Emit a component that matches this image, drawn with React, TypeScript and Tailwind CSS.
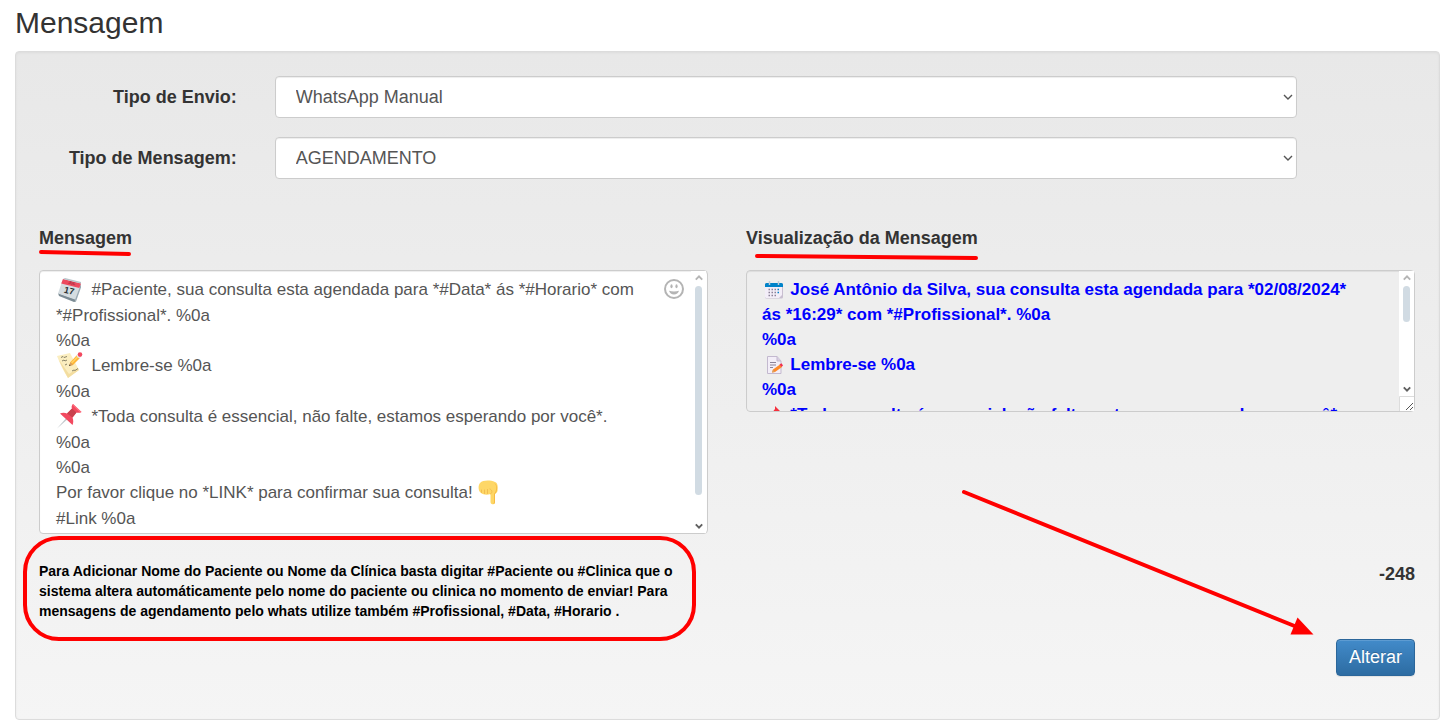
import type { ReactNode } from "react";

const previewText = [
  "      José Antônio da Silva, sua consulta esta agendada para *02/08/2024* ás *16:29* com *#Profissional*. %0a",
  "%0a",
  "      Lembre-se %0a",
  "%0a",
  "      *Toda consulta é essencial, não falte, estamos esperando por você*.",
].join("\n");

const shippingTypes = ["WhatsApp Manual", "WhatsApp Automático", "SMS"];
const messageTypes = ["AGENDAMENTO", "CONFIRMAÇÃO", "ANIVERSÁRIO"];

function Emoji({ children, label }: { children: ReactNode; label: string }) {
  return (
    <svg
      role="img"
      aria-label={label}
      viewBox="0 1 26 26"
      className="inline-block size-[26px] overflow-visible align-top"
    >
      {children}
    </svg>
  );
}

function CalendarEmoji() {
  return (
    <Emoji label="Calendário">
      <path d="M2 17 19 23l1 2.500-2 .5L3 20z" fill="#7b8b94" />
      <path d="M7 3 25 7.500 19 23.500 2 17.500z" fill="#d5dde1" />
      <path d="M25 7.500v4l-5 14-1-2z" fill="#9aaab4" />
      <path d="M7 3 25 7.500 23.300 12 5.200 7.500z" fill="#ec4a5f" />
      <path d="M7 3l2-1 16 4v1.500z" fill="#b9c5cb" />
      <text x="12" y="7.500" fontSize="4" fontWeight="bold" fill="#a0293b" transform="rotate(14 12 7)">
        JUL
      </text>
      <text x="8" y="17" fontSize="9" fontWeight="bold" fill="#2c3336" transform="rotate(14 10 15)">
        17
      </text>
    </Emoji>
  );
}

function NoteEmoji() {
  return (
    <Emoji label="Anotação">
      <path d="M1 4 14 1l9 17-11 8C8 20 4 12 1 4z" fill="#fbeec0" />
      <path d="M3 8c3 7 6 12 9 18l11-8-1-2-9 6z" fill="#f3dda0" />
      <path
        d="M5 5.500l2-1 1 1 3-1M6 9l2-1 1 1 2-1M9 13l2-1M16 19l2-1 1 .5 3-2"
        fill="none"
        stroke="#8a8468"
        strokeWidth="1"
      />
      <path d="M13 14l1.500-4L21 3l3 3-7 7z" fill="#ffb636" />
      <path d="M15 10.500l7-7 1 1-7 7z" fill="#ffd469" />
      <path d="M13 14l1.500-4 2.500 3z" fill="#d9a05f" />
      <path d="M13 14l.6-1.600 1 1z" fill="#2b3b47" />
      <path d="M21 3l3 3" stroke="#e8ebed" strokeWidth="2" />
      <circle cx="24" cy="2.600" r="2.300" fill="#f2495f" />
    </Emoji>
  );
}

function PinEmoji() {
  return (
    <Emoji label="Alfinete">
      <path d="M1 25.500 12 13l1.500 1.500z" fill="#c0c7cb" />
      <path d="M4 10.500c2-1 5-1 7 0l5-5C15 4 16 2 17 1l8.500 8c-2 1-3.500 1-5 .5l-4 5c1 3 1 5 0 7.500z" fill="#f2495f" />
      <path d="M11 10.500l5-5 4.500 4-4 5z" fill="#c9414d" />
      <path d="M17 1l8.500 8-1.500.5L16.500 2z" fill="#ff6f7f" />
    </Emoji>
  );
}

function PointDownEmoji() {
  return (
    <Emoji label="Apontando para baixo">
      <path
        d="M3 4c3-3 10-3 15-1 3 1 3 5 2.500 9-.5 2-2 2-2.500 3v8c0 3-4.500 3-4.500 0v-8c-3 1-7 1-9.500-1C1 12 1 6 3 4z"
        fill="#fed766"
      />
      <path
        d="M4.500 11v2.500M7.500 11v3.500M10.500 10.500v4M13.500 15c2-1 2-4-.5-5"
        fill="none"
        stroke="#f2bd50"
        strokeWidth="1"
        strokeLinecap="round"
      />
      <path d="M17 4c3 2 3 7 0 11v8c0 1-.5 2-1.500 2.200 2 .3 2.500-1.200 2.500-2.200v-8c3-3 3-10-1-11z" fill="#f7bb42" />
    </Emoji>
  );
}

function SmileIcon() {
  return (
    <svg viewBox="0 0 20 20" className="size-5" aria-hidden="true">
      <circle cx="10" cy="10" r="9" fill="none" stroke="#b4b4b4" strokeWidth="2" />
      <ellipse cx="7.500" cy="7.300" rx="1.100" ry="2" fill="#b4b4b4" />
      <ellipse cx="12.500" cy="7.300" rx="1.100" ry="2" fill="#b4b4b4" />
      <path d="M5 11.800c3 .8 7 .8 10 0-.6 2.200-2.600 3.700-5 3.700s-4.400-1.500-5-3.700z" fill="#b4b4b4" />
    </svg>
  );
}

function Chevron({ up, thin, className }: { up?: boolean; thin?: boolean; className: string }) {
  return (
    <svg viewBox="0 0 10 6" className={className} aria-hidden="true">
      <path
        d={up ? "M1 5l4-4 4 4" : "M1 1l4 4 4-4"}
        fill="none"
        stroke="currentColor"
        strokeWidth={thin ? 1.4 : 2.4}
      />
    </svg>
  );
}

function Scrollbar({ thumb }: { thumb: string }) {
  return (
    <div className="flex h-full w-[15px] flex-col items-center bg-white py-1">
      <Chevron up className="h-[6px] w-2 text-[#b5b5b5]" />
      <div className="mt-[5px] w-full grow">
        <div className={`mx-auto w-[7px] rounded-full bg-[#d1dbe3] ${thumb}`} />
      </div>
      <Chevron className="h-[6px] w-2 text-[#606060]" />
    </div>
  );
}

function SelectRow({ id, label, options }: { id: string; label: string; options: string[] }) {
  return (
    <div className="grid grid-cols-12 items-center gap-x-[38px]">
      <label htmlFor={id} className="col-span-2 text-right font-bold whitespace-nowrap">
        {label}
      </label>
      <div className="relative col-span-9">
        <select
          id={id}
          className="block h-[42px] w-full appearance-none rounded border border-[#ccc] bg-white px-5 text-[#555] shadow-[inset_0_1px_1px_rgba(0,0,0,0.075)]"
        >
          {options.map((option) => (
            <option key={option}>{option}</option>
          ))}
        </select>
        <Chevron thin className="pointer-events-none absolute top-[18px] right-1 h-[6px] w-[10px] text-[#555]" />
      </div>
    </div>
  );
}

function CalendarIcon() {
  return (
    <svg viewBox="0 0 18 18" className="size-[18px] shrink-0" aria-hidden="true">
      <rect x="0" y="2" width="18" height="15.500" rx="1.500" fill="#c8bfd0" />
      <path d="M0 6h17v8l-3 3H1.500A1.500 1.500 0 0 1 0 15.500z" fill="#f3eef8" />
      <path d="M0 3.500A1.500 1.500 0 0 1 1.500 2h15A1.500 1.500 0 0 1 18 3.500V6H0z" fill="#0083c9" />
      <path d="M4.500 0v4M13.500 0v4" stroke="#c3ccd6" strokeWidth="1.500" />
      <path d="M3.500 8.500h8M3.500 11.500h8M3.500 14.500h8" stroke="#8c8299" strokeWidth="1.500" strokeDasharray="1.500 1.500" />
      <path d="M12.500 8.500H14M12.500 11.500H14" stroke="#0083c9" strokeWidth="1.500" />
    </svg>
  );
}

function MemoIcon() {
  return (
    <svg viewBox="0 0 18 18" className="size-[18px] shrink-0" aria-hidden="true">
      <path d="M2.500.5H12L16 5v12.500H2.500z" fill="#f3eef8" stroke="#c3b9cf" />
      <path d="M12 .5V5h4" fill="#d8cfe2" stroke="#c3b9cf" />
      <path d="M5 6.500h6M5 9h6M5 11.500h3" stroke="#8c8299" />
      <path d="M7 16.500l1-3 7-5 2 2.500-7 5z" fill="#ff8a2a" />
      <path d="M14.500 8.500l2-1.300 1.500 2.300-1.500 1.500z" fill="#f0314f" />
      <path d="M7 16.500l1-3 2 2.500z" fill="#d9a05f" />
    </svg>
  );
}

function PinIcon() {
  return (
    <svg viewBox="0 0 18 18" className="size-[18px] shrink-0" aria-hidden="true">
      <path d="M1 17l6-7 1.500 1.500z" fill="#9b9b9b" />
      <path d="M3 6.500l5-1L10 3V0l8 8h-3l-2.500 2.500-1 5z" fill="#f5303d" />
    </svg>
  );
}

export default function App() {
  return (
    <main className="bg-white pr-[14px] pl-[15px] font-['Liberation_Sans',Arial,sans-serif] text-[18px] leading-[25px] text-[#333]">
      <h1 className="pt-[6px] pb-3 text-[30px] leading-[33px]">Mensagem</h1>

      <form
        onSubmit={(e) => e.preventDefault()}
        className="rounded border border-[#dcdcdc] bg-linear-to-b from-[#e8e8e8] to-[#f5f5f5] pt-6 pr-6 pb-[43px] pl-[23px] shadow-[inset_0_1px_3px_rgba(0,0,0,0.05)]"
      >
        <div className="flex flex-col gap-[19px]">
          <SelectRow id="tipo-envio" label="Tipo de Envio:" options={shippingTypes} />
          <SelectRow id="tipo-mensagem" label="Tipo de Mensagem:" options={messageTypes} />
        </div>

        <div className="mt-[47px] grid grid-cols-2 items-start gap-x-[38px]">
          <div>
            <h2 id="mensagem-label" className="relative mb-[19px] w-fit font-bold">
              Mensagem
              <svg viewBox="0 0 94 6" className="absolute top-6 left-0 h-[6px] w-[94px]" aria-hidden="true">
                <path d="M2 2l88 2" stroke="#f00" strokeWidth="4" strokeLinecap="round" />
              </svg>
            </h2>
            <div className="relative rounded border border-[#ccc] bg-white shadow-[inset_0_1px_1px_rgba(0,0,0,0.075)]">
              <div
                role="textbox"
                aria-multiline="true"
                aria-labelledby="mensagem-label"
                contentEditable
                suppressContentEditableWarning
                className="h-[262px] overflow-hidden pt-[6px] pr-12 pl-4 text-[17px] text-[#555] outline-none"
              >
                <div>
                  <CalendarEmoji />
                  &nbsp; #Paciente, sua consulta esta agendada para *#Data* ás *#Horario* com *#Profissional*. %0a
                </div>
                <div>%0a</div>
                <div>
                  <NoteEmoji />
                  &nbsp; Lembre-se %0a
                </div>
                <div>%0a</div>
                <div>
                  <PinEmoji />
                  &nbsp; *Toda consulta é essencial, não falte, estamos esperando por você*.
                </div>
                <div>%0a</div>
                <div>%0a</div>
                <div>
                  Por favor clique no *LINK* para confirmar sua consulta! <PointDownEmoji />
                </div>
                <div>#Link %0a</div>
              </div>
              <button type="button" aria-label="Inserir emoji" className="absolute top-2 right-[23px]">
                <SmileIcon />
              </button>
              <div className="absolute inset-y-0 right-px">
                <Scrollbar thumb="h-[209px]" />
              </div>
            </div>
          </div>

          <div>
            <div className="relative mb-[19px] w-fit">
              <label htmlFor="preview" className="font-bold">
                Visualização da Mensagem
              </label>
              <svg viewBox="0 0 224 6" className="absolute top-7 left-[9px] h-[6px] w-[224px]" aria-hidden="true">
                <path d="M2 2l219 2" stroke="#f00" strokeWidth="4" strokeLinecap="round" />
              </svg>
            </div>
            <div className="relative overflow-hidden rounded">
              <textarea
                id="preview"
                readOnly
                value={previewText}
                className="block h-[142px] w-full resize-none overflow-hidden rounded border border-[#ccc] bg-[#eee] pt-[6px] pr-12 pl-[15px] text-[17px] font-bold text-[#00f] shadow-[inset_0_1px_1px_rgba(0,0,0,0.075)] outline-none"
              />
              {/* emoji drawn over the blank start of lines 1, 4 and 6 */}
              <div className="pointer-events-none absolute top-[11px] bottom-px left-[19px] flex flex-col gap-[57px] overflow-hidden">
                <CalendarIcon />
                <div className="flex flex-col gap-8">
                  <MemoIcon />
                  <PinIcon />
                </div>
              </div>
              <div className="absolute top-px right-px bottom-4">
                <Scrollbar thumb="h-[36px]" />
              </div>
              <svg
                viewBox="0 0 15 15"
                className="absolute right-px bottom-px size-[15px] bg-white"
                aria-hidden="true"
              >
                <path d="M.5 15V.5H15" fill="none" stroke="#dcdcdc" />
                <path d="M7 14l7-7M11 14l3-3" stroke="#555" strokeWidth="1" />
              </svg>
            </div>
          </div>

          <div className="relative mt-[27px]">
            <p className="text-[14px] leading-5 font-bold text-black">
              Para Adicionar Nome do Paciente ou Nome da Clínica basta digitar #Paciente ou #Clinica que o sistema
              altera automáticamente pelo nome do paciente ou clinica no momento de enviar! Para mensagens de
              agendamento pelo whats utilize também #Profissional, #Data, #Horario .
            </p>
            <div className="pointer-events-none absolute -top-[25px] right-3 -bottom-5 -left-4 rounded-[36px] border-4 border-[#f00]" />
          </div>

          <div className="relative mt-[28px] flex flex-col items-end">
            <output className="font-bold">-248</output>
            <button
              type="submit"
              className="mt-[52px] h-[37px] rounded border border-[#2b669a] bg-linear-to-b from-[#428bca] to-[#2d6ca2] px-3 text-white shadow-[inset_0_1px_0_rgba(255,255,255,0.15),0_1px_1px_rgba(0,0,0,0.075)] [text-shadow:0_-1px_0_rgba(0,0,0,0.2)]"
            >
              Alterar
            </button>
            <svg
              viewBox="0 0 353 147"
              className="pointer-events-none absolute -top-[73px] right-[101px] h-[147px] w-[353px]"
              aria-hidden="true"
            >
              <path d="M3 3l333 135" stroke="#f00" strokeWidth="4" strokeLinecap="round" />
              <path d="M352.500 145.500h-23l7-17z" fill="#f00" />
            </svg>
          </div>
        </div>
      </form>
    </main>
  );
}
